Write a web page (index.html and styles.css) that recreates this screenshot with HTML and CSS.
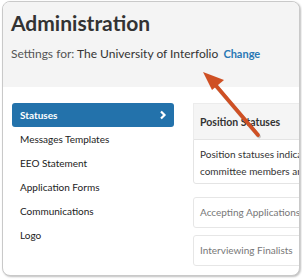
FILE: index.html
```html
<!DOCTYPE html>
<html lang="en">
<head>
    <meta charset="UTF-8">
    <meta name="viewport" content="width=device-width, initial-scale=1.0">
    <title>Administration</title>
    <link rel="stylesheet" href="styles.css">
</head>
<body>
    <div class="card">
        <div class="header">
            <h1>Administration</h1>
            <p class="settings">Settings for: <span class="unit">The University of Interfolio</span> <a class="change" href="#">Change</a></p>
        </div>

        <div class="main">
            <ul class="menu">
                <li class="active">
                    <span>Statuses</span>
                    <svg class="chevron" width="8" height="10" viewBox="0 0 8 10">
                        <path d="M2 1.5 L5.5 5 L2 8.5" fill="none" stroke="#fff" stroke-width="2.2"/>
                    </svg>
                </li>
                <li>Messages Templates</li>
                <li>EEO Statement</li>
                <li>Application Forms</li>
                <li>Communications</li>
                <li>Logo</li>
            </ul>

            <div class="panel">
                <div class="panel-title">Position Statuses</div>
                <div class="panel-desc">
                    Position statuses indicate the stage of a position to<br>
                    committee members and applicants.
                </div>
                <div class="status-row">Accepting Applications</div>
                <div class="status-row">Interviewing Finalists</div>
            </div>
        </div>
    </div>

    <!-- callout arrow drawn over the screenshot -->
    <svg class="arrow" width="302" height="279" viewBox="0 0 302 279">
        <line x1="258" y1="135" x2="212" y2="81" stroke="rgba(0,0,0,0.18)" stroke-width="4" stroke-linecap="round" transform="translate(1,1.5)"/>
        <line x1="258" y1="135" x2="212" y2="81" stroke="#cf5024" stroke-width="3.8" stroke-linecap="round"/>
        <polygon points="203,72 224,80 212,90" fill="#cf5024"/>
    </svg>
</body>
</html>
```

FILE: styles.css
```css
* {
    margin: 0;
    padding: 0;
    box-sizing: border-box;
}

body {
    font-family: Lato, 'Open Sans', sans-serif;
    background: #fff;
    color: #333;
    width: 302px;
    height: 279px;
    overflow: hidden;
    position: relative;
}

.card {
    margin: 1px 0 0 2px;
    width: 298px;
    height: 275px;
    border: 1px solid #c9c9c9;
    border-radius: 8px;
    box-shadow: 1px 1px 2px rgba(0, 0, 0, 0.25);
    overflow: hidden;
    background: #fff;
}

.header {
    height: 85px;
    background: #f4f4f4;
    padding: 8px 0 0 8px;
}

h1 {
    font-size: 21px;
    font-weight: 700;
    color: #333;
    line-height: 26px;
}

.settings {
    margin-top: 10px;
    font-size: 12px;
    line-height: 16px;
    color: #555;
    white-space: nowrap;
}

.unit {
    color: #333;
}

.change {
    margin-left: 2px;
    color: #2a78b5;
    font-size: 11px;
    font-weight: 700;
    text-decoration: none;
}

.main {
    display: flex;
    padding: 16px 0 0 9px;
    gap: 19px;
}

.menu {
    list-style: none;
    width: 162px;
    flex-shrink: 0;
}

.menu li {
    height: 24px;
    display: flex;
    align-items: center;
    padding-left: 8px;
    font-size: 10px;
    color: #222;
}

.menu li.active {
    background: #2372ab;
    border-radius: 3px;
    color: #fff;
    font-weight: 700;
    justify-content: space-between;
    padding-right: 7px;
}

.panel {
    width: 200px;
    flex-shrink: 0;
    font-size: 10px;
}

.panel > div {
    white-space: nowrap;
    overflow: hidden;
}

.panel-title {
    height: 36px;
    line-height: 36px;
    padding-left: 6px;
    background: #f5f5f5;
    border: 1px solid #ececec;
    border-bottom: none;
    font-size: 10.5px;
    font-weight: 700;
    color: #333;
}

.panel-desc {
    height: 45px;
    padding: 6px 0 0 6px;
    border: 1px solid #e4e4e4;
    border-radius: 0 0 3px 3px;
    line-height: 17px;
    color: #333;
}

.status-row {
    height: 31px;
    line-height: 29px;
    padding-left: 6px;
    margin-top: 13px;
    border: 1px solid #e6e6e6;
    border-radius: 3px;
    color: #777;
}

.status-row + .status-row {
    margin-top: 7px;
}

.arrow {
    position: absolute;
    left: 0;
    top: 0;
    pointer-events: none;
}
```
